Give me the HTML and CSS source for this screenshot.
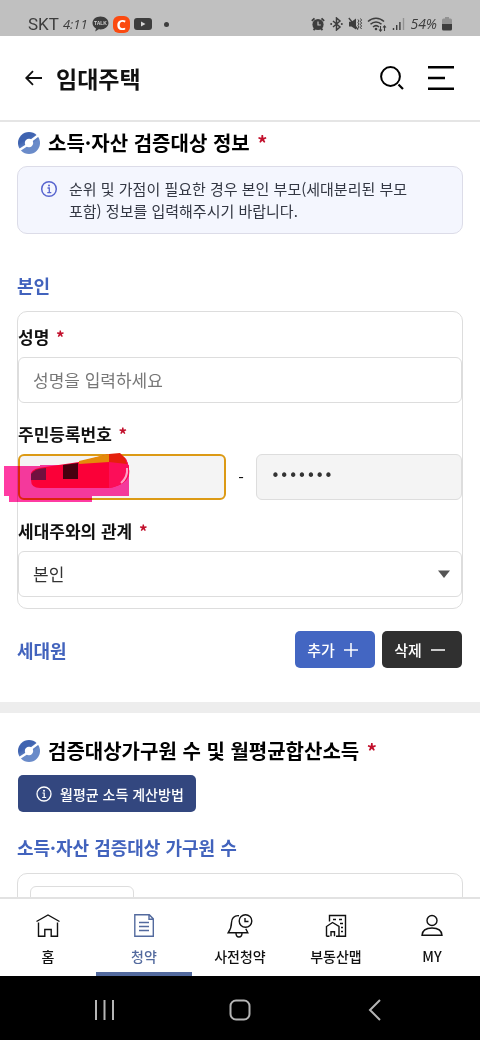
FILE: index.html
```html
<!DOCTYPE html>
<html lang="ko">
<head>
<meta charset="utf-8">
<meta name="viewport" content="width=device-width, initial-scale=1">
<title>임대주택</title>
<link rel="stylesheet" href="styles.css">
</head>
<body>
<div class="app">
  <div class="status">
    <div class="status-group">
      <span class="carrier">SKT</span>
      <span class="clock">4:11</span>
      <svg width="17" height="16" viewBox="0 0 17 16"><path d="M8.500 0.500C4 0.500 .5 3.300 .5 7c0 2.400 1.500 4.300 3.500 5.400L3.200 15.500 6.700 13.300c.6.100 1.200.1 1.800.1 4.500 0 8-2.800 8-6.400S13 .5 8.500.5z" fill="#3d3d3d"/><text x="8.500" y="9" class="talk">TALK</text></svg>
      <span class="c-badge">C</span>
      <svg width="18" height="12" viewBox="0 0 18 12"><rect width="18" height="12" rx="3" fill="#3d3d3d"/><path d="M7 3.500v5L11.500 6z" fill="#d5d5d5"/></svg>
      <span class="dot"></span>
    </div>
    <div class="status-group right">
      <svg width="14" height="14" viewBox="0 0 14 14"><circle cx="7" cy="7.500" r="5.600" fill="#3d3d3d"/><path d="M.8 3.800 3.500 1.300M13.200 3.800 10.500 1.300M2.500 13 4 11.500M11.500 13 10 11.500" stroke="#3d3d3d" stroke-width="1.800"/><path d="M7 4.500V8H9.800" fill="none" stroke="#c0c0c0" stroke-width="1.200"/></svg>
      <svg width="13" height="14" viewBox="0 0 13 14"><path d="M3 4l7 6-3.500 3V1L10 4l-7 6" fill="none" stroke="#3d3d3d" stroke-width="1.500"/><circle cx="1.200" cy="7" r="1" fill="#3d3d3d"/><circle cx="11.800" cy="7" r="1" fill="#3d3d3d"/></svg>
      <svg width="14" height="14" viewBox="0 0 14 14"><path d="M1 4.800h2.500L8 1.500v11L3.500 9.500H1z" fill="#3d3d3d"/><path d="M.8 1 10 12.500" stroke="#3d3d3d" stroke-width="1.300"/><path d="M10 2.500l1 1.500-1 1.500 1 1.500-1 1.500 1 1.500-1 1.500M12.500 1.500l1 1.500-1 1.500 1 1.500-1 1.500 1 1.500-1 1.500 1 1.500" fill="none" stroke="#3d3d3d"/></svg>
      <svg width="20" height="15" viewBox="0 0 20 15"><g fill="none" stroke="#3d3d3d" stroke-width="1.500"><path d="M1 4.500c4.500-4.500 11.500-4.500 16 0M3.500 7.300c3.200-3.100 7.800-3.100 11 0M6 10c2-1.800 4-1.800 6 0"/><path d="M13.500 9v5M12 12.500l1.500 1.700 1.500-1.700M17.500 14V9M16 10.500 17.500 8.800 19 10.500" stroke-width="1.100"/></g><circle cx="9" cy="12" r="1.300" fill="#3d3d3d"/></svg>
      <svg width="13" height="14" viewBox="0 0 13 14"><path d="M1.500 11v2M4.700 8v5M7.900 5v8" stroke="#3d3d3d" stroke-width="1.400"/><path d="M11.500 1v12" stroke="#929292" stroke-width="1.400"/></svg>
      <span class="battery-text">54%</span>
      <svg width="10" height="14" viewBox="0 0 10 14"><path d="M3 0h4v1.500h1.500q1.500 0 1.500 1.500V7H0V3q0-1.500 1.500-1.500H3z" fill="#929292"/><path d="M0 7h10v5q0 1.500-1.500 1.500h-7Q0 13.500 0 12z" fill="#3d3d3d"/></svg>
    </div>
  </div>

  <header class="header">
    <button class="icon-btn" type="button" aria-label="뒤로"><svg width="18" height="16" viewBox="0 0 18 16"><path d="M17 8H1.500M8 1.200 1.200 8 8 14.800" fill="none" stroke="#111" stroke-width="1.800"/></svg></button>
    <h1 class="page-title">임대주택</h1>
    <button class="icon-btn" type="button" aria-label="검색"><svg width="26" height="26" viewBox="0 0 26 26"><circle cx="11.500" cy="11.500" r="9.400" fill="none" stroke="#000" stroke-width="2"/><path d="M19.500 19.500 24 24" stroke="#000" stroke-width="2.200"/></svg></button>
    <button class="icon-btn" type="button" aria-label="메뉴"><svg width="26" height="26" viewBox="0 0 26 26"><path d="M0 2.200h26M0 13h17M0 23.800h26" stroke="#000" stroke-width="2.400"/></svg></button>
  </header>

  <main class="content">
    <section class="section">
      <h2 class="heading">
        <svg width="24" height="24" viewBox="0 0 24 24"><defs><linearGradient id="mark" x1="0" y1="0" x2="0.600" y2="1"><stop offset="0.400" stop-color="#3f63b0"/><stop offset="0.700" stop-color="#6a8bc9"/></linearGradient></defs><circle cx="12" cy="12" r="11" fill="url(#mark)"/><circle cx="12" cy="12" r="4.200" fill="#fff"/><path d="M2.500 19 11 13.500M13 10.500 21 4.500" stroke="#fff" stroke-width="2.400"/></svg>
        <span>소득·자산 검증대상 정보 <em class="req">*</em></span>
      </h2>
      <div class="notice">
        <svg width="18" height="18" viewBox="0 0 18 18"><circle cx="9" cy="9" r="7.300" fill="none" stroke="#5865cf" stroke-width="1.500"/><path d="M7.500 8H9.300v4.700M7.300 12.700h4" fill="none" stroke="#5865cf" stroke-width="1.300"/><circle cx="9" cy="5.400" r="1" fill="#5865cf"/></svg>
        <p class="notice-text">순위 및 가점이 필요한 경우 본인 부모(세대분리된 부모<br>포함) 정보를 입력해주시기 바랍니다.</p>
      </div>

      <h3 class="subheading self">본인</h3>
      <form class="card">
        <div class="field">
          <label class="label" for="name">성명 <em class="req">*</em></label>
          <input class="control" id="name" type="text" placeholder="성명을 입력하세요">
        </div>
        <div class="field">
          <label class="label" for="rrn1">주민등록번호 <em class="req">*</em></label>
          <div class="rrn">
            <input class="control shaded active" id="rrn1" type="text">
            <span class="dash">-</span>
            <input class="control shaded secret" id="rrn2" type="password" value="0000000" aria-label="주민등록번호 뒷자리">
            <svg class="marker" width="128" height="52" viewBox="0 0 128 52"><path d="M0 16h36v-1h89v31H88v6H5v-6H0z" fill="#ff3ba3"/></svg>
            <svg class="scribble" width="128" height="52" viewBox="0 0 128 52"><path d="M27 23q2-5 14-6L75 12 105 4h11l6 5q4 8 3 16-3 10-20 13H36q-9 0-9-8z" fill="#fb0038"/><path d="M105 4h11l6 5q4 8 3 16-3 10-20 13z" fill="#fc0e59"/><path d="M75 11 105 4v8L75 14z" fill="#e58a0a"/><path d="M105 4l11-1 5 5 2 6-18-2z" fill="#e5200c"/><path d="M27 30v-6q4-6 15-6v12z" fill="#71103f"/><path d="M59 15l15-2v16H59z" fill="#46000f"/><path d="M123 18q1 9-6 15" fill="none" stroke="#ffa0c8" stroke-width="2"/></svg>
          </div>
        </div>
        <div class="field">
          <label class="label" for="relation">세대주와의 관계 <em class="req">*</em></label>
          <div class="select-wrap">
            <select class="control" id="relation"><option>본인</option></select>
            <svg class="caret" width="12" height="8" viewBox="0 0 12 8"><path d="M0 .5h12L6 8z" fill="#555"/></svg>
          </div>
        </div>
      </form>

      <div class="member-row">
        <h3 class="subheading">세대원</h3>
        <div class="actions">
          <button class="btn add" type="button">추가 <svg width="16" height="16" viewBox="0 0 16 16"><path d="M1 8h14M8 1v14" stroke="#fff" stroke-width="1.500"/></svg></button>
          <button class="btn remove" type="button">삭제 <svg width="16" height="16" viewBox="0 0 16 16"><path d="M1 8h14" stroke="#fff" stroke-width="1.500"/></svg></button>
        </div>
      </div>
    </section>

    <section class="section income">
      <h2 class="heading">
        <svg width="24" height="24" viewBox="0 0 24 24"><circle cx="12" cy="12" r="11" fill="url(#mark)"/><circle cx="12" cy="12" r="4.200" fill="#fff"/><path d="M2.500 19 11 13.500M13 10.500 21 4.500" stroke="#fff" stroke-width="2.400"/></svg>
        <span>검증대상가구원 수 및 월평균합산소득 <em class="req">*</em></span>
      </h2>
      <button class="btn guide" type="button"><svg width="16" height="16" viewBox="0 0 16 16"><circle cx="8" cy="8" r="7" fill="none" stroke="#fff" stroke-width="1.300"/><path d="M6.500 7H8.200v4.500M6.200 11.500h4" fill="none" stroke="#fff" stroke-width="1.200"/><circle cx="8" cy="4.700" r="1" fill="#fff"/></svg>월평균 소득 계산방법</button>
      <h3 class="subheading">소득·자산 검증대상 가구원 수</h3>
      <div class="card count">
        <input class="control count-input" type="text" aria-label="가구원 수">
      </div>
    </section>
  </main>

  <nav class="tabs">
    <a class="tab" href="#"><svg width="26" height="26" viewBox="0 0 26 26"><path d="M1.500 8.500 13 2l11.500 6.500M3.500 9.500V23.300H9.800V16.500h6.400v6.800h6.300V9.500"/></svg>홈</a>
    <a class="tab current" href="#"><svg width="26" height="26" viewBox="0 0 26 26"><path d="M3.800 1.700h14.500l4 4.200v17.400H3.800zM18 2v4.300h4M8 9.500h10M8 13.500h10M8 17.500h10"/></svg>청약</a>
    <a class="tab" href="#"><svg width="26" height="26" viewBox="0 0 26 26"><path d="M12 2.700C7 2.200 4.500 5.500 4.500 9.500c0 5-1 7-3.300 10.200h19.600l-2-4M9 20q0 4 3 4t3-4"/><circle cx="18.500" cy="8" r="6.300"/><path d="M18 5v3.500h3.500"/></svg>사전청약</a>
    <a class="tab" href="#"><svg width="26" height="26" viewBox="0 0 26 26"><path d="M6.500 8.500V2.500h16v20.800H16M3.500 23.300V13.500L9.500 9.500l6.500 4v9.800M3.500 23.300h3M8 23.300v-4.500h3.500v4.500M13 23.300h3"/><path d="M10 6.500h3M16 6.500h3M17 10.500h3M18 14.500h2M18 18.500h2"/></svg>부동산맵</a>
    <a class="tab" href="#"><svg width="26" height="26" viewBox="0 0 26 26"><circle cx="13" cy="7.500" r="5"/><path d="M3 22.300Q3.500 15 13 15t10 7.300z"/></svg>MY</a>
  </nav>

  <div class="system">
    <button class="sys-btn" type="button" aria-label="최근 앱"><svg width="22" height="22" viewBox="0 0 22 22"><path d="M2 1v20M10.500 1v20M19 1v20"/></svg></button>
    <button class="sys-btn" type="button" aria-label="홈 화면"><svg width="22" height="22" viewBox="0 0 22 22"><rect x="1.500" y="1.500" width="19" height="19" rx="5.500"/></svg></button>
    <button class="sys-btn" type="button" aria-label="이전"><svg width="22" height="22" viewBox="0 0 22 22"><path d="M16 1 6 11l10 10"/></svg></button>
  </div>
</div>
</body>
</html>
```
FILE: styles.css
```css
* { box-sizing: border-box; }
body {
  margin: 0;
  background: #fff;
  color: #111;
  font-family: "Noto Sans CJK KR", "Noto Sans", sans-serif;
  font-size: 16px;
}
h1, h2, h3, p { margin: 0; }
button, input, select { font: inherit; }
button { border: 0; padding: 0; background: none; color: inherit; }
svg { display: block; flex: none; }

.app { display: flex; flex-direction: column; height: 100vh; }

.status {
  display: flex;
  justify-content: space-between;
  align-items: flex-end;
  height: 36px;
  padding: 0 28px 2px;
  background: #c0c0c0;
  color: #3d3d3d;
  flex: none;
}
.status-group { display: flex; align-items: center; gap: 4px; height: 20px; }
.status-group.right { gap: 5px; }
.carrier { font: 17px/20px Roboto, sans-serif; }
.clock { font: italic 13px/20px "Open Sans", sans-serif; }
.battery-text { font: italic 14px/20px "Open Sans", sans-serif; }
.talk { font: bold 5px "Liberation Sans", sans-serif; fill: #d0d0d0; text-anchor: middle; }
.c-badge {
  width: 17px;
  height: 17px;
  border-radius: 6px;
  background: #fb4a10;
  color: #fff;
  font: bold 15px/17px "Open Sans", sans-serif;
  text-align: center;
}
.dot { width: 5px; height: 5px; margin-left: 8px; border-radius: 50%; background: #3d3d3d; }

.header {
  display: flex;
  align-items: center;
  gap: 13px;
  height: 86px;
  padding: 0 26px 0 25px;
  border-bottom: 2px solid #e5e5e5;
  flex: none;
}
.page-title { flex: 1; font-size: 23px; font-weight: 700; line-height: 32px; }
.header .icon-btn + .icon-btn { margin-left: 10px; }

.content { flex: 1; min-height: 0; overflow: hidden; }
.section { padding: 7px 17px 34px; }
.heading {
  display: flex;
  align-items: center;
  gap: 7px;
  font-size: 20px;
  font-weight: 700;
  line-height: 28px;
  color: #000;
}
.req { margin-left: 2px; color: #c2102c; font-style: normal; font-weight: 700; }
.notice {
  display: flex;
  gap: 11px;
  margin-top: 9px;
  padding: 11px 22px;
  border: 1px solid #dcdce8;
  border-radius: 10px;
  background: #f4f6fe;
}
.notice svg { margin-top: 2px; }
.notice-text { font-size: 15px; line-height: 22px; color: #333743; }
.subheading { font-size: 18px; font-weight: 700; line-height: 26px; color: #4263bd; }
.self { margin: 38px 0 13px; }

.card { border: 1px solid #ddd; border-radius: 10px; padding: 11px 0; }
.field + .field { margin-top: 17px; }
.label { display: block; font-weight: 700; font-size: 17px; line-height: 28px; margin-bottom: 6px; }
.control {
  display: block;
  width: 100%;
  height: 46px;
  padding: 0 14px 2px;
  border: 1px solid #ddd;
  border-radius: 6px;
  background: #fff;
  color: #333;
  font-size: 17px;
  outline: 0;
}
.control::placeholder { color: #777; }
.shaded { background: #f4f4f4; }
.secret { font-family: "DejaVu Sans", sans-serif; font-size: 15px; }
.active { border: 2px solid #dc9a15; }
.rrn { display: flex; align-items: center; position: relative; }
.rrn .control { flex: 1; min-width: 0; }
.dash { width: 30px; text-align: center; }
.marker, .scribble { position: absolute; left: -14px; top: -4px; pointer-events: none; }
.marker { mix-blend-mode: multiply; }
.select-wrap { position: relative; }
select.control { appearance: none; }
.caret { position: absolute; right: 12px; top: 19px; pointer-events: none; }

.member-row { display: flex; justify-content: space-between; align-items: center; margin-top: 22px; padding-right: 1px; }
.actions { display: flex; gap: 7px; }
.btn {
  display: flex;
  align-items: center;
  justify-content: center;
  gap: 8px;
  height: 37px;
  border-radius: 5px;
  color: #fff;
  font-size: 15px;
  font-weight: 500;
}
.add, .remove { width: 80px; padding-right: 4px; }
.add { background: #4366c2; }
.remove { background: #303030; }

.income { border-top: 11px solid #ededed; padding-top: 24px; }
.guide { margin: 10px 1px 22px; padding: 0 12px 0 18px; background: #33477f; font-size: 14px; }
.count { margin-top: 13px; padding: 12px; height: 80px; }
.count-input { width: 104px; }

.tabs { display: flex; height: 79px; border-top: 2px solid #e2e2e2; background: #fff; flex: none; }
.tab {
  flex: 1;
  display: flex;
  flex-direction: column;
  align-items: center;
  gap: 6px;
  padding-top: 14px;
  border-bottom: 4px solid transparent;
  color: #111;
  font-size: 14px;
  font-weight: 500;
  line-height: 22px;
  text-decoration: none;
}
.tab svg { fill: none; stroke: currentColor; stroke-width: 1.4; }
.current { color: #536a9e; border-color: #536a9e; }

.system {
  display: flex;
  justify-content: space-around;
  align-items: center;
  height: 64px;
  padding: 3px 38px 0;
  background: #000;
  flex: none;
}
.sys-btn svg { fill: none; stroke: #b5b5b5; stroke-width: 2; }
```
